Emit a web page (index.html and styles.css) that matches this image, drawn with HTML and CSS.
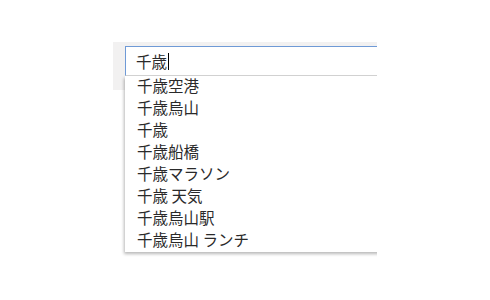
FILE: index.html
```html
<!DOCTYPE html>
<html lang="ja">
<head>
<meta charset="utf-8">
<title>千歳</title>
<link rel="stylesheet" href="styles.css">
</head>
<body>
<div class="stage">
  <div class="clip">
    <div class="band">
      <div class="search">
        <div class="input"><span class="value">千歳</span><span class="caret"></span></div>
        <ul class="suggest">
          <li>千歳空港</li>
          <li>千歳烏山</li>
          <li>千歳</li>
          <li>千歳船橋</li>
          <li>千歳マラソン</li>
          <li>千歳 天気</li>
          <li>千歳烏山駅</li>
          <li>千歳烏山 ランチ</li>
        </ul>
      </div>
    </div>
  </div>
</div>
</body>
</html>
```
FILE: styles.css
```css
html, body {
  margin: 0;
  padding: 0;
  background: #ffffff;
}
body {
  width: 490px;
  height: 300px;
  font-family: "Noto Sans CJK JP", "Noto Sans", sans-serif;
  color: #2a2a2a;
}
.stage {
  padding: 42px 0 0 113px;
}
.clip {
  width: 264px;
  height: 222px;
  overflow: hidden;
}
.band {
  height: 48px;
  background: #f2f1f1;
  padding: 4px 0 0 12px;
  box-sizing: border-box;
}
.search {
  position: relative;
  width: 264px;
}
.input {
  height: 30px;
  box-sizing: border-box;
  background: #ffffff;
  border-top: 1px solid #6f9ad6;
  border-left: 1px solid #6f9ad6;
  border-bottom: 1px solid #d4d4d4;
  padding-left: 10px;
  display: flex;
  align-items: center;
  font-size: 15.5px;
  line-height: 20px;
}
.caret {
  display: inline-block;
  width: 1px;
  height: 17px;
  background: #000000;
  margin-left: 1px;
}
.suggest {
  position: absolute;
  left: 0;
  top: 30px;
  width: 264px;
  margin: 0;
  padding: 0;
  list-style: none;
  background: #ffffff;
  box-shadow: -1px 2px 3px rgba(0, 0, 0, 0.28);
}
.suggest li {
  height: 22px;
  line-height: 19px;
  padding-left: 12px;
  font-size: 15.5px;
  white-space: nowrap;
}
```
